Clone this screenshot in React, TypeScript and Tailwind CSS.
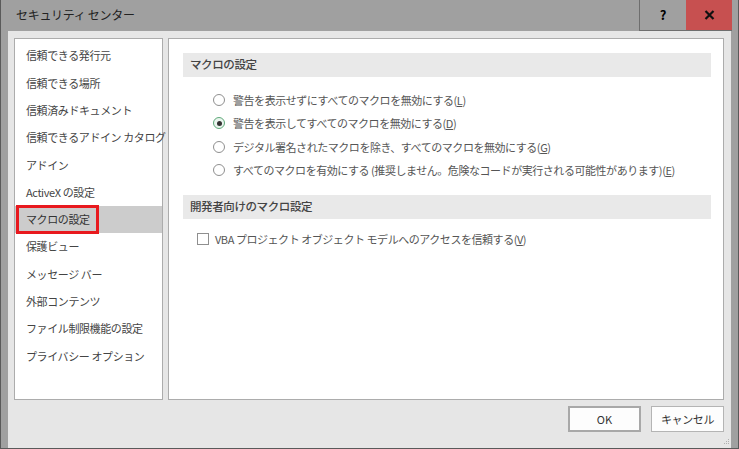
const font = { fontFamily: '"Noto Sans CJK JP", "Noto Sans", sans-serif' };

const menuItems = [
  "信頼できる発行元",
  "信頼できる場所",
  "信頼済みドキュメント",
  "信頼できるアドイン カタログ",
  "アドイン",
  "ActiveX の設定",
  "マクロの設定",
  "保護ビュー",
  "メッセージ バー",
  "外部コンテンツ",
  "ファイル制限機能の設定",
  "プライバシー オプション",
];

const macroOptions = [
  { label: "警告を表示せずにすべてのマクロを無効にする", key: "L", checked: false },
  { label: "警告を表示してすべてのマクロを無効にする", key: "D", checked: true },
  { label: "デジタル署名されたマクロを除き、すべてのマクロを無効にする", key: "G", checked: false },
  { label: "すべてのマクロを有効にする (推奨しません。危険なコードが実行される可能性があります)", key: "E", checked: false },
];

function Radio({ checked }: { checked: boolean }) {
  return (
    <span
      className={`flex h-[12px] w-[12px] shrink-0 items-center justify-center rounded-full border ${
        checked ? "border-[#5fa97a] bg-[#eaf5ee]" : "border-[#8f8f8f] bg-white"
      }`}
    >
      {checked && <span className="h-[5px] w-[5px] rounded-full bg-[#333]" />}
    </span>
  );
}

export default function App() {
  return (
    <div
      className="flex h-[449px] w-[739px] flex-col border-x border-b border-[#5a5a5a] bg-[#a0a0a0] text-[#444]"
      style={font}
    >
      {/* Title bar */}
      <div className="flex h-[31px] shrink-0 items-start">
        <div className="flex h-[30px] flex-1 items-center pl-[15px] text-[12px] tracking-[-0.3px] text-[#222]">
          セキュリティ センター
        </div>
        <div className="flex h-[31px] w-[47px] items-center justify-center border-b border-l border-[#6e6e6e] bg-[#a0a0a0] text-[13px] font-bold text-black">
          ?
        </div>
        <div className="flex h-[31px] w-[46px] items-center justify-center border-b border-[#6e6e6e] bg-[#c75050] text-black">
          <svg width="11" height="10" viewBox="0 0 11 10">
            <path d="M1.5 1 L9.5 9 M9.5 1 L1.5 9" stroke="#111" strokeWidth="2.2" />
          </svg>
        </div>
        <div className="w-[6px]" />
      </div>

      {/* Body */}
      <div className="mx-[7px] flex flex-1 flex-col bg-[#e6e6e6] pl-[6px] pr-[7px] pt-[7px]">
        <div className="flex h-[362px] gap-[5px]">
          {/* Left menu */}
          <div className="flex w-[149px] flex-col border border-[#acacac] bg-white pt-[3px]">
            {menuItems.map((item) => {
              const selected = item === "マクロの設定";
              return (
                <div
                  key={item}
                  className={`relative flex h-[27.3px] items-center whitespace-nowrap pl-[11px] text-[11px] tracking-[-0.4px] ${
                    selected ? "bg-[#cccccc] text-[#333]" : "text-[#444]"
                  }`}
                >
                  {selected && (
                    <span className="absolute left-[1px] top-[-1px] h-[29px] w-[83px] border-[3px] border-[#e8191e]" />
                  )}
                  <span className="relative">{item}</span>
                </div>
              );
            })}
          </div>

          {/* Right panel */}
          <div className="flex flex-1 flex-col border border-[#acacac] bg-white pl-[14px] pr-[12px] pt-[14px]">
            <div className="flex h-[24px] items-center bg-[#e9e9e9] pl-[7px] text-[11.5px] font-medium tracking-[-0.4px] text-[#444]">
              マクロの設定
            </div>
            <div className="flex flex-col pl-[30px] pt-[11px]">
              {macroOptions.map((opt) => (
                <div
                  key={opt.key}
                  className="flex h-[23.5px] items-center gap-[8px] whitespace-nowrap text-[11px] tracking-[-0.45px] text-[#555]"
                >
                  <Radio checked={opt.checked} />
                  <span>
                    {opt.label}(<span className="underline">{opt.key}</span>)
                  </span>
                </div>
              ))}
            </div>
            <div className="mt-[13px] flex h-[24px] items-center bg-[#e9e9e9] pl-[7px] text-[11.5px] font-medium tracking-[-0.4px] text-[#444]">
              開発者向けのマクロ設定
            </div>
            <div className="flex h-[40px] items-center gap-[6px] whitespace-nowrap pl-[14px] text-[11px] tracking-[-0.45px] text-[#555]">
              <span className="h-[12px] w-[12px] shrink-0 border border-[#8f8f8f] bg-white" />
              <span>
                VBA プロジェクト オブジェクト モデルへのアクセスを信頼する(<span className="underline">V</span>)
              </span>
            </div>
          </div>
        </div>

        {/* Buttons */}
        <div className="relative flex flex-1 items-start justify-end gap-[10px] pt-[6px]">
          <button className="h-[26px] w-[73px] border-2 border-[#a8a8a8] bg-[#fdfdfd] text-[11px] text-[#333]">
            OK
          </button>
          <button className="h-[26px] w-[73px] border border-[#b4b4b4] bg-[#fdfdfd] text-[11px] tracking-[-0.4px] text-[#333]">
            キャンセル
          </button>
          <svg className="absolute bottom-[1px] right-[-6px]" width="8" height="8" viewBox="0 0 8 8">
            <g fill="#b0b0b0">
              <rect x="6" y="0" width="1" height="1" />
              <rect x="4" y="2" width="1" height="1" />
              <rect x="6" y="2" width="1" height="1" />
              <rect x="2" y="4" width="1" height="1" />
              <rect x="4" y="4" width="1" height="1" />
              <rect x="6" y="4" width="1" height="1" />
            </g>
          </svg>
        </div>
      </div>
    </div>
  );
}
